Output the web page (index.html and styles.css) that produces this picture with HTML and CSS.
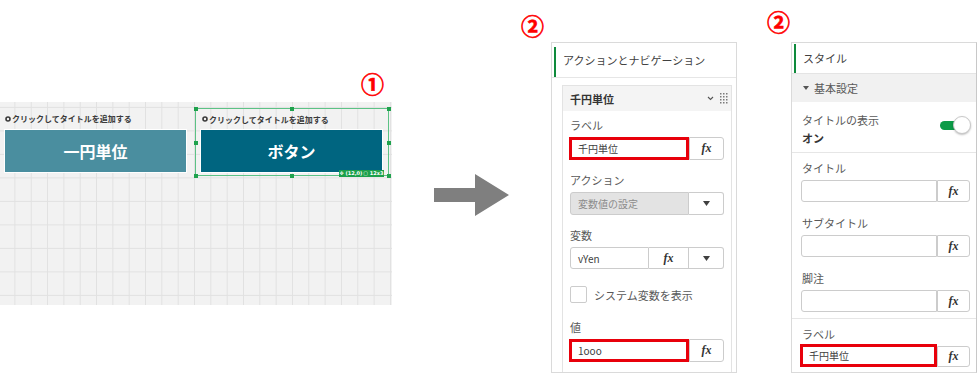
FILE: index.html
```html
<!DOCTYPE html>
<html lang="ja">
<head>
<meta charset="utf-8">
<title>ボタン設定</title>
<link rel="stylesheet" href="styles.css">
</head>
<body>
<div class="page">
  <section class="col-canvas">
    <div class="anno anno-1">①</div>
    <div class="canvas">
      <div class="widget">
        <div class="w-title"><svg class="gear" viewBox="0 0 6 6"><circle cx="3" cy="3" r="2" /></svg>クリックしてタイトルを追加する</div>
        <div class="btn btn-faded">一円単位</div>
      </div>
      <div class="widget selected">
        <span class="h h-tl"></span><span class="h h-tm"></span><span class="h h-tr"></span>
        <span class="h h-ml"></span><span class="h h-mr"></span>
        <span class="h h-bl"></span><span class="h h-bm"></span><span class="h h-br"></span>
        <div class="w-title"><svg class="gear" viewBox="0 0 6 6"><circle cx="3" cy="3" r="2" /></svg>クリックしてタイトルを追加する</div>
        <div class="btn">ボタン</div>
        <div class="badge"><span>✥ (12,0)</span><span>▢ 12x3</span></div>
      </div>
    </div>
  </section>

  <div class="arrow">
    <svg width="76" height="42" viewBox="0 0 76 42"><polygon points="0,14 41,14 41,0 75,21 41,42 41,28 0,28" /></svg>
  </div>

  <section class="col-mid">
    <div class="anno anno-2a">②</div>
    <div class="panel panel-mid">
      <div class="p-head"><span class="bar"></span>アクションとナビゲーション</div>
      <div class="card">
        <div class="card-head">
          <span>千円単位</span>
          <span class="head-icons">
            <svg class="chev" width="7" height="5" viewBox="0 0 7 5"><polyline points="1,1 3.5,3.5 6,1" /></svg>
            <svg class="grip" width="8" height="11" viewBox="0 0 8 11">
              <rect x="0" y="0" width="1.5" height="1.5"/><rect x="3" y="0" width="1.5" height="1.5"/><rect x="6" y="0" width="1.5" height="1.5"/>
              <rect x="0" y="3" width="1.5" height="1.5"/><rect x="3" y="3" width="1.5" height="1.5"/><rect x="6" y="3" width="1.5" height="1.5"/>
              <rect x="0" y="6" width="1.5" height="1.5"/><rect x="3" y="6" width="1.5" height="1.5"/><rect x="6" y="6" width="1.5" height="1.5"/>
              <rect x="0" y="9" width="1.5" height="1.5"/><rect x="3" y="9" width="1.5" height="1.5"/><rect x="6" y="9" width="1.5" height="1.5"/>
            </svg>
          </span>
        </div>
        <div class="card-body">
          <div class="field">
            <div class="lbl">ラベル</div>
            <div class="row">
              <div class="inp red mid-red">千円単位</div>
              <div class="fx">fx</div>
            </div>
          </div>
          <div class="field">
            <div class="lbl">アクション</div>
            <div class="row">
              <div class="sel-text">変数値の設定</div>
              <div class="sel-arrow"><svg width="7" height="5" viewBox="0 0 7 5"><polygon points="0,0 7,0 3.5,5" /></svg></div>
            </div>
          </div>
          <div class="field">
            <div class="lbl">変数</div>
            <div class="row row-var">
              <div class="inp var-inp">vYen</div>
              <div class="fx fx-mid">fx</div>
              <div class="sel-arrow"><svg width="7" height="5" viewBox="0 0 7 5"><polygon points="0,0 7,0 3.5,5" /></svg></div>
            </div>
          </div>
          <div class="check-row">
            <span class="checkbox"></span>
            <span class="check-lbl">システム変数を表示</span>
          </div>
          <div class="field field-last">
            <div class="lbl">値</div>
            <div class="row">
              <div class="inp red mid-red">1ooo</div>
              <div class="fx">fx</div>
            </div>
          </div>
        </div>
      </div>
    </div>
  </section>

  <section class="col-right">
    <div class="anno anno-2b">②</div>
    <div class="panel panel-right">
      <div class="r-head"><span class="bar"></span>スタイル</div>
      <div class="r-sec"><svg class="tri" width="6" height="4" viewBox="0 0 6 4"><polygon points="0,0 6,0 3,4" /></svg>基本設定</div>
      <div class="r-toggle">
        <div class="tg-text">
          <div class="tg-lbl">タイトルの表示</div>
          <div class="tg-val">オン</div>
        </div>
        <div class="toggle"><span class="track"></span><span class="knob"></span></div>
      </div>
      <div class="r-fields">
        <div class="rfield">
          <div class="lbl">タイトル</div>
          <div class="row rrow"><div class="inp wide"></div><div class="fx rfx">fx</div></div>
        </div>
        <div class="rfield">
          <div class="lbl">サブタイトル</div>
          <div class="row rrow"><div class="inp wide"></div><div class="fx rfx">fx</div></div>
        </div>
        <div class="rfield">
          <div class="lbl">脚注</div>
          <div class="row rrow"><div class="inp wide"></div><div class="fx rfx">fx</div></div>
        </div>
      </div>
      <div class="r-label">
        <div class="lbl lbl-tight">ラベル</div>
        <div class="row rrow-red">
          <div class="inp red right-red">千円単位</div>
          <div class="fx rfx rfx-short">fx</div>
        </div>
      </div>
    </div>
  </section>
</div>
</body>
</html>
```

FILE: styles.css
```css
* { box-sizing: border-box; }
html, body { margin: 0; padding: 0; background: #ffffff; }
body {
  width: 980px;
  height: 375px;
  overflow: hidden;
  font-family: "Noto Sans CJK JP", "Noto Sans", sans-serif;
  color: #404040;
}
.page { display: flex; align-items: flex-start; height: 375px; }

/* annotations */
.anno {
  color: #ff0000;
  font: 700 23px/23px "Noto Sans CJK JP", sans-serif;
  -webkit-text-stroke: 0.6px #ff0000;
}
.anno-1 { height: 102px; padding-top: 72px; padding-right: 8px; text-align: right; }
.anno-2a { height: 42px; padding-top: 14px; }
.anno-2b { height: 42px; padding-top: 10px; }

/* canvas */
.col-canvas { width: 392px; flex: none; }
.canvas {
  height: 203px;
  background-color: #f2f2f2;
  background-image:
    linear-gradient(to right, transparent 14px, #e1e1e1 14px, #e1e1e1 15px, transparent 15px),
    linear-gradient(to bottom, transparent 5px, #e1e1e1 5px, #e1e1e1 6px, transparent 6px);
  background-size: 16.33px 100%, 100% 23.5px;
  display: flex;
  align-items: flex-start;
  padding: 6px 0 0 4px;
}
.widget { width: 183px; display: flex; flex-direction: column; flex: none; }
.w-title {
  height: 21px;
  display: flex;
  align-items: center;
  gap: 1px;
  padding-left: 1px;
  font-size: 8px;
  font-weight: 700;
  color: #3a3a3a;
  white-space: nowrap;
}
.gear { width: 6px; height: 6px; fill: none; stroke: #3a3a3a; stroke-width: 1.6; }
.btn {
  height: 44px;
  display: flex;
  align-items: center;
  justify-content: center;
  border: 1px solid #ffffff;
  background: #006580;
  color: #ffffff;
  font-size: 16px;
  font-weight: 700;
}
.btn-faded { background: #4a8e9f; }
.widget.selected {
  position: relative;
  width: 194px;
  height: 68px;
  margin-left: 8px;
  border: 1px solid #5cc285;
  padding: 0 5px 0 4px;
}
.widget.selected .w-title { height: 20px; padding-left: 2px; }
.h { position: absolute; width: 4px; height: 4px; background: #1fa24d; }
.h-tl { left: -2.5px; top: -2.5px; }
.h-tm { left: 94px; top: -2.5px; }
.h-tr { right: -2.5px; top: -2.5px; }
.h-ml { left: -2.5px; top: 31.5px; }
.h-mr { right: -2.5px; top: 31.5px; }
.h-bl { left: -2.5px; bottom: -2.5px; }
.h-bm { left: 94px; bottom: -2.5px; }
.h-br { right: -2.5px; bottom: -2.5px; }
.badge {
  position: absolute;
  right: 4px;
  bottom: -2px;
  width: 45px;
  height: 7px;
  background: #1ba04a;
  color: #ffffff;
  font: 700 5px/7px "DejaVu Sans", sans-serif;
  display: flex;
  justify-content: space-around;
  white-space: nowrap;
}

/* arrow */
.arrow { margin-left: 42px; padding-top: 174px; flex: none; }
.arrow svg { display: block; fill: #7f7f7f; }

/* panels shared */
.panel { border: 1px solid #dadada; overflow: hidden; background: #ffffff; }
.bar { width: 2px; align-self: stretch; background: #0f8a3c; flex: none; }
.lbl { height: 16px; line-height: 16px; font-size: 11px; color: #595959; margin-bottom: 4px; white-space: nowrap; }
.row { display: flex; height: 23px; }
.inp {
  flex: none;
  border: 1px solid #cccccc;
  border-radius: 3px 0 0 3px;
  font-size: 10px;
  color: #404040;
  padding-left: 7px;
  display: flex;
  align-items: center;
  white-space: nowrap;
}
.inp.red { border: 3px solid #e8000b; border-radius: 0; padding-left: 6px; }
.fx {
  flex: none;
  width: 35px;
  border: 1px solid #cccccc;
  border-radius: 0 3px 3px 0;
  display: flex;
  align-items: center;
  justify-content: center;
  font: italic 700 12px "Liberation Serif", serif;
  color: #333333;
}

/* middle panel */
.col-mid { margin-left: 11px; flex: none; }
.panel-mid { margin-left: 30px; width: 186px; height: 331px; }
.p-head {
  height: 35px;
  border-bottom: 1px solid #e6e6e6;
  display: flex;
  align-items: center;
  font-size: 11px;
  color: #404040;
  white-space: nowrap;
}
.p-head .bar { margin: 4px 7px 0 2px; }
.card {
  margin: 7px 4px 0 10px;
  border: 1px solid #e3e3e3;
  height: 300px;
}
.card-head {
  height: 25px;
  background: #f4f4f4;
  display: flex;
  align-items: center;
  justify-content: space-between;
  padding: 0 3px 0 7px;
  font-size: 11px;
  font-weight: 700;
  color: #333333;
}
.head-icons { display: flex; align-items: center; gap: 6px; }
.chev { fill: none; stroke: #555555; stroke-width: 1.1; }
.grip { fill: #7a7a7a; }
.card-body { padding: 6px 7px 0 7px; }
.field + .field { margin-top: 12px; }
.mid-red { width: 120px; margin-left: -1px; }
.sel-text {
  flex: none;
  width: 119px;
  background: #e3e3e3;
  border: 1px solid #cccccc;
  border-radius: 3px 0 0 3px;
  font-size: 10px;
  color: #8c8c8c;
  padding-left: 7px;
  display: flex;
  align-items: center;
}
.sel-arrow {
  flex: none;
  width: 35px;
  border: 1px solid #cccccc;
  border-left: none;
  border-radius: 0 3px 3px 0;
  display: flex;
  align-items: center;
  justify-content: center;
}
.sel-arrow svg { fill: #404040; }
.row-var { height: 22px; }
.var-inp { width: 79px; }
.fx-mid { width: 40px; border-left: none; border-radius: 0; }
.check-row { display: flex; align-items: center; gap: 7px; margin-top: 17px; height: 17px; }
.checkbox { width: 17px; height: 17px; border: 1px solid #cccccc; border-radius: 2px; background: #ffffff; flex: none; }
.check-lbl { font-size: 11px; color: #595959; white-space: nowrap; }
.field-last { margin-top: 16px; }

/* right panel */
.col-right { margin-left: 30px; flex: none; }
.panel-right { margin-left: 24px; width: 186px; height: 331px; border-right-color: #c8c8c8; }
.r-head {
  height: 30px;
  display: flex;
  align-items: center;
  font-size: 11px;
  color: #404040;
}
.r-head .bar { margin: 1px 7px 0 2px; }
.r-sec {
  height: 29px;
  background: #f1f1f1;
  border-top: 1px solid #e4e4e4;
  display: flex;
  align-items: center;
  padding-left: 11px;
  font-size: 11px;
  color: #595959;
}
.tri { fill: #555555; margin-right: 5px; }
.r-toggle {
  height: 51px;
  border-bottom: 1px solid #e6e6e6;
  padding: 10px 5px 0 10px;
  display: flex;
  justify-content: space-between;
  align-items: flex-start;
}
.tg-lbl { height: 16px; line-height: 16px; font-size: 11px; color: #595959; white-space: nowrap; }
.tg-val { height: 16px; line-height: 16px; font-size: 11px; font-weight: 700; color: #333333; margin-top: 2px; }
.toggle { display: flex; align-items: center; margin-top: 4px; height: 18px; }
.track { width: 21px; height: 9px; background: #0c9b47; border-radius: 5px; }
.knob {
  width: 18px;
  height: 18px;
  margin-left: -8px;
  border-radius: 50%;
  background: #ffffff;
  border: 1px solid #c9c9c9;
  box-shadow: 0 1px 2px rgba(0, 0, 0, 0.25);
}
.r-fields { padding: 7px 5px 6px 9px; border-bottom: 1px solid #e6e6e6; }
.r-fields .lbl, .r-label .lbl { padding-left: 1px; }
.rfield + .rfield { margin-top: 13px; }
.rrow { height: 22px; }
.wide { width: 136px; }
.rfx { width: 33px; }
.r-label { padding: 7px 5px 0 9px; }
.lbl-tight { margin-bottom: 2px; }
.rrow-red { display: flex; align-items: flex-end; height: 23px; }
.right-red { width: 137px; height: 23px; margin-left: -1px; }
.rfx-short { height: 21px; }
```
